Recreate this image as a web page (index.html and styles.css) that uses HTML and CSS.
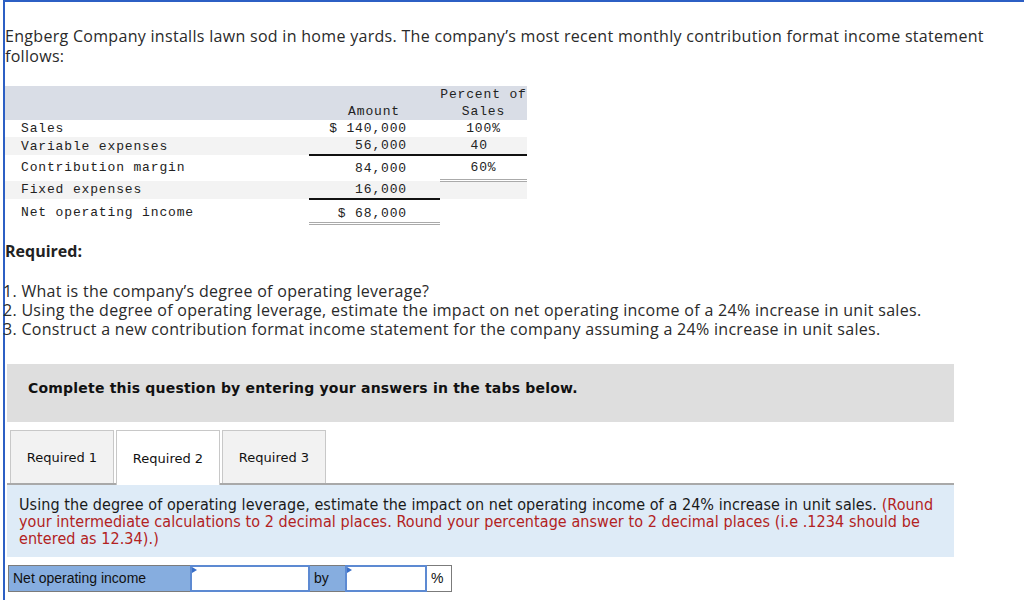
FILE: index.html
```html
<!DOCTYPE html>
<html lang="en">
<head>
<meta charset="utf-8">
<title>Engberg Company</title>
<link rel="stylesheet" href="styles.css">
</head>
<body>
<div class="frame">
  <p class="intro">Engberg Company installs lawn sod in home yards. The company’s most recent monthly contribution format income statement follows:</p>

  <table class="stmt">
    <colgroup><col class="c-label"><col class="c-amt"><col class="c-pct"></colgroup>
    <tr class="head">
      <td></td>
      <td class="amt-h">Amount</td>
      <td class="pct-h">Percent of<br>Sales</td>
    </tr>
    <tr class="r-sales">
      <td class="lbl">Sales</td>
      <td class="amt">$ 140,000</td>
      <td class="pct">100%</td>
    </tr>
    <tr class="r-var shade">
      <td class="lbl">Variable expenses</td>
      <td class="amt rule">56,000</td>
      <td class="pct rule">40&nbsp;</td>
    </tr>
    <tr class="r-cm">
      <td class="lbl">Contribution margin</td>
      <td class="amt">84,000</td>
      <td class="pct dbl">60%</td>
    </tr>
    <tr class="r-fix shade">
      <td class="lbl">Fixed expenses</td>
      <td class="amt rule">16,000</td>
      <td class="pct"></td>
    </tr>
    <tr class="r-net">
      <td class="lbl">Net operating income</td>
      <td class="amt dbl">$ 68,000</td>
      <td class="pct"></td>
    </tr>
  </table>

  <p class="req-title">Required:</p>
  <div class="req-list">
    <p>1. What is the company’s degree of operating leverage?</p>
    <p>2. Using the degree of operating leverage, estimate the impact on net operating income of a 24% increase in unit sales.</p>
    <p>3. Construct a new contribution format income statement for the company assuming a 24% increase in unit sales.</p>
  </div>

  <div class="instructions">Complete this question by entering your answers in the tabs below.</div>

  <div class="tabs">
    <div class="tab">Required 1</div>
    <div class="tab active">Required 2</div>
    <div class="tab">Required 3</div>
  </div>

  <div class="panel">
    Using the degree of operating leverage, estimate the impact on net operating income of a 24% increase in unit sales. <span class="note">(Round your intermediate calculations to 2 decimal places. Round your percentage answer to 2 decimal places (i.e .1234 should be entered as 12.34).)</span>
  </div>

  <div class="answer-row">
    <div class="cell label">Net operating income</div>
    <div class="cell input wide"></div>
    <div class="cell label by">by</div>
    <div class="cell input narrow"></div>
    <div class="cell unit">%</div>
  </div>
</div>
</body>
</html>
```

FILE: styles.css
```css
html, body {
  margin: 0;
  padding: 0;
  background: #ffffff;
}

.frame {
  margin-left: 3px;
  border-left: 2px solid #2c5fc4;
  border-top: 2px solid #2c5fc4;
  min-height: 600px;
  box-sizing: border-box;
}

.intro {
  margin: 0;
  padding: 24px 30px 0 0;
  font-family: "Open Sans", "Liberation Sans", sans-serif;
  font-size: 16px;
  letter-spacing: 0.3px;
  line-height: 20px;
  color: #2a2a2a;
}

/* income statement table */
.stmt {
  margin-top: 20px;
  border-collapse: collapse;
  font-family: "Liberation Mono", "DejaVu Sans Mono", monospace;
  font-size: 13px;
  letter-spacing: 0.85px;
  color: #222;
}
.c-label { width: 304px; }
.c-amt { width: 131px; }
.c-pct { width: 87px; }

.stmt td {
  padding: 0;
  height: 17px;
  line-height: 17px;
  white-space: nowrap;
}
.stmt .head td {
  background: #d9dde6;
  height: 34px;
  vertical-align: bottom;
}
.stmt .amt-h { text-align: right; padding-right: 40px; }
.stmt .pct-h { text-align: center; }

.stmt .lbl { padding-left: 16px; }
.stmt .amt { text-align: right; padding-right: 33px; }
.stmt .pct { text-align: center; }

.stmt .shade td { background: #f3f3f3; }
.stmt .rule { border-bottom: 2px solid #111; }
.stmt .dbl { border-bottom: 3px double #aaa; }

.stmt .r-cm td { height: 23px; line-height: 23px; }
.stmt .r-net td { padding-top: 5px; height: 17px; line-height: 17px; vertical-align: top; }

/* required */
.req-title {
  margin: 16px 0 0;
  font-family: "Open Sans", "Liberation Sans", sans-serif;
  font-weight: 700;
  font-size: 16px;
  line-height: 20px;
  color: #222;
}
.req-list {
  margin-top: 21px;
  margin-left: -2px;
  font-family: "Open Sans", "Liberation Sans", sans-serif;
  font-size: 16px;
  letter-spacing: 0.3px;
  line-height: 19px;
  color: #2a2a2a;
}
.req-list p { margin: 0; }

/* instructions box */
.instructions {
  margin: 25px 0 0 2px;
  width: 947px;
  height: 58px;
  box-sizing: border-box;
  padding: 14px 0 0 21px;
  background: #dedede;
  font-family: "DejaVu Sans", Verdana, sans-serif;
  font-weight: 700;
  font-size: 14px;
  letter-spacing: 0.2px;
  line-height: 20px;
  color: #111;
}

/* tabs */
.tabs {
  display: flex;
  gap: 2px;
  margin: 8px 0 0 5px;
  align-items: flex-end;
}
.tab {
  width: 104px;
  height: 53px;
  box-sizing: border-box;
  border: 1px solid #c8c8c8;
  border-bottom: none;
  background: #f2f2f2;
  display: flex;
  align-items: center;
  justify-content: center;
  font-family: "DejaVu Sans", Verdana, sans-serif;
  font-size: 13px;
  color: #111;
}
.tab.active {
  background: #ffffff;
  height: 55px;
  margin-bottom: -2px;
  position: relative;
  z-index: 1;
}

/* panel */
.panel {
  margin-left: 2px;
  width: 947px;
  box-sizing: border-box;
  border-top: 2px solid #a9a9a9;
  background: #deebf7;
  padding: 11px 18px 10px 12px;
  font-family: "DejaVu Sans Condensed", "DejaVu Sans", sans-serif;
  font-stretch: condensed;
  font-size: 16px;
  letter-spacing: 0.07px;
  line-height: 17px;
  color: #1a1a1a;
}
.note { color: #b22222; }

/* answer row */
.answer-row {
  display: flex;
  margin: 8px 0 0 3px;
  height: 27px;
}
.cell {
  box-sizing: border-box;
  border: 1px solid #7b7b7b;
  height: 27px;
  font-family: "Liberation Sans", Arial, sans-serif;
  font-size: 14px;
  line-height: 25px;
  color: #111;
  margin-left: -1px;
}
.cell:first-child { margin-left: 0; }
.cell.label {
  background: #86addf;
  padding-left: 4px;
  width: 183px;
}
.cell.by { width: 37px; padding-left: 4px; }
.cell.input {
  background: #fff;
  border: 2px solid #5d8ad2;
  position: relative;
}
.cell.input::before {
  content: "";
  position: absolute;
  left: 0;
  top: 0;
  border-left: 5px solid #3a6fc8;
  border-top: 3px solid transparent;
  border-bottom: 3px solid transparent;
}
.cell.wide { width: 120px; }
.cell.narrow { width: 82px; }
.cell.unit {
  background: #fff;
  width: 26px;
  padding-left: 4px;
}
```
